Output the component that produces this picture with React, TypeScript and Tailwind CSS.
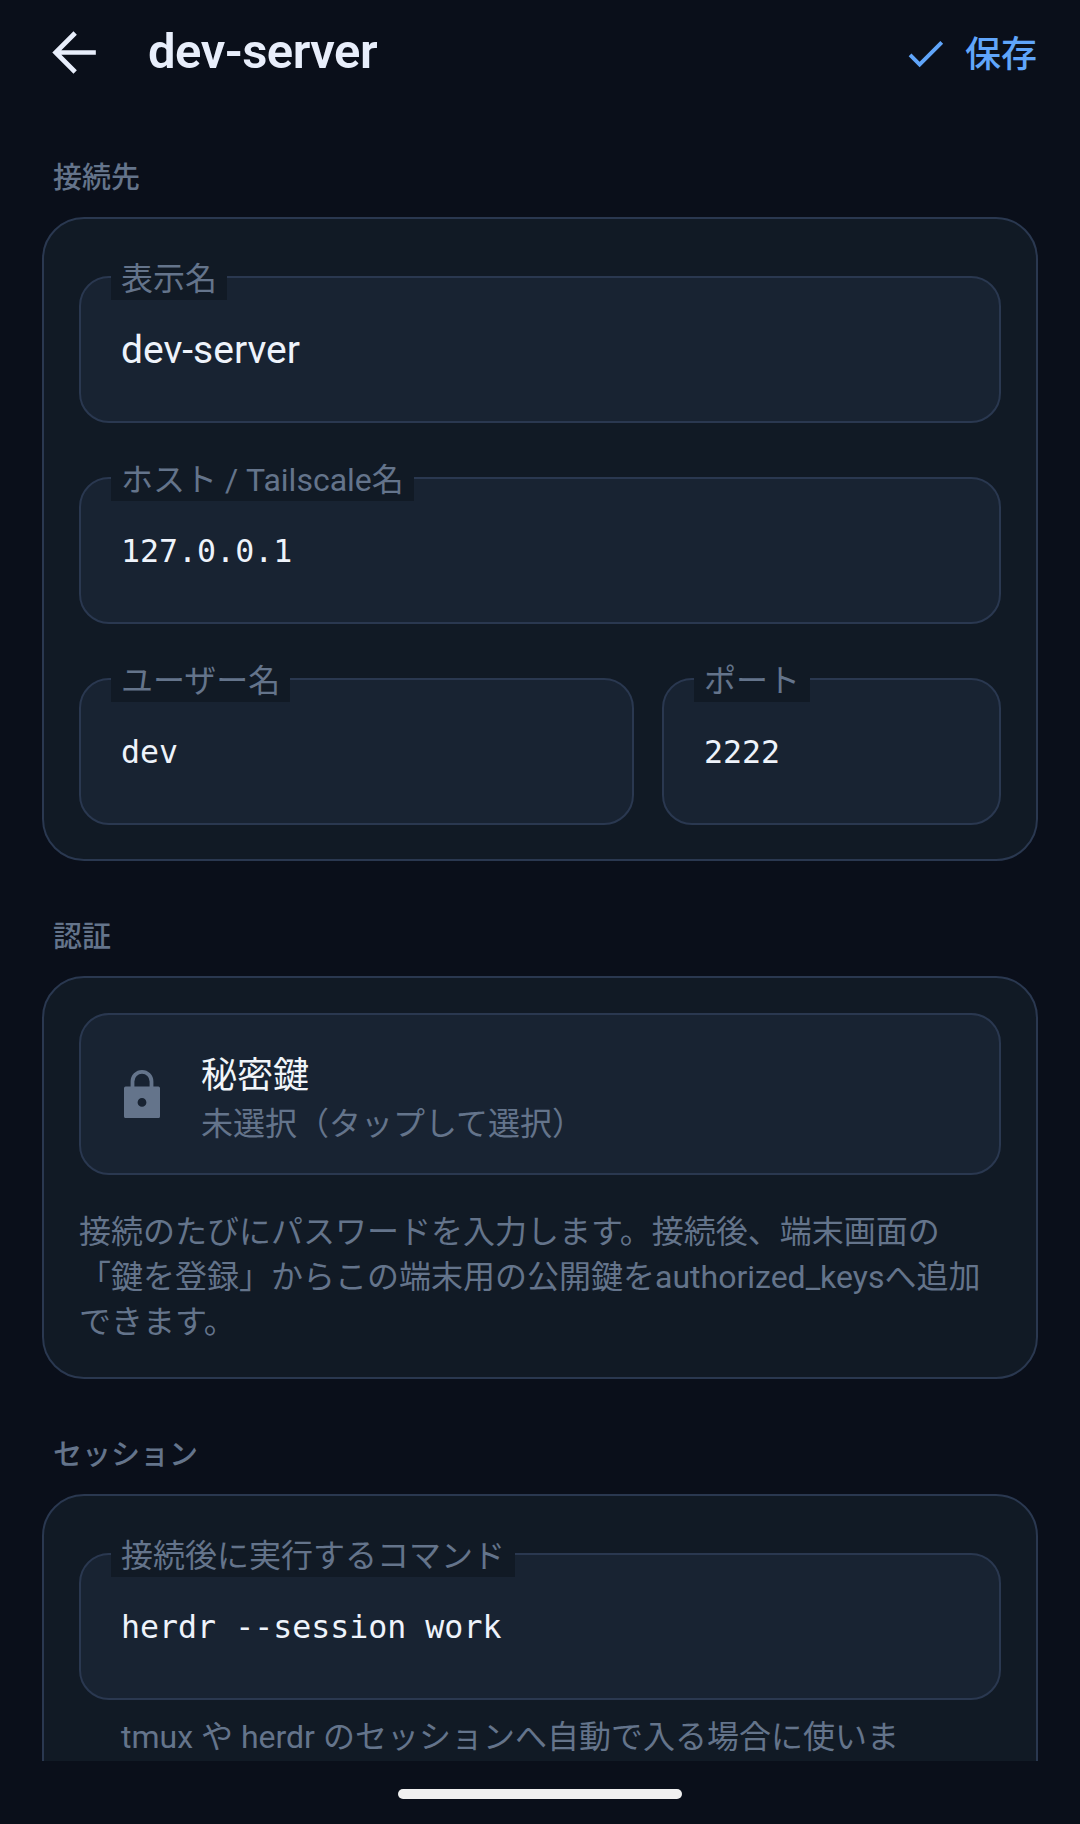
const SANS = "font-['Roboto','Noto_Sans_CJK_JP',sans-serif]";

function Field({ label, value, mono, className }: { label: string; value: string; mono?: boolean; className?: string }) {
  return (
    <div className={`relative h-[147px] rounded-[30px] border-2 border-[#2a3850] bg-[#182332] px-[40px] pt-[2px] flex items-center ${className ?? ''}`}>
      <span className="absolute left-[30px] top-[-20px] h-[42px] px-[10px] bg-[#111a25] text-[32px] leading-[42px] text-[#64748b] whitespace-nowrap">
        {label}
      </span>
      <span className={mono ? "font-['DejaVu_Sans_Mono',monospace] text-[31.6px] text-[#eef3fb]" : 'text-[39px] text-[#eef3fb]'}>
        {value}
      </span>
    </div>
  );
}

function SectionLabel({ children }: { children: string }) {
  return <h2 className="pl-[53px] pt-[1px] text-[29px] leading-[40px] font-medium text-[#64748b]">{children}</h2>;
}

function Card({ children, className }: { children: React.ReactNode; className?: string }) {
  return (
    <div className={`mx-[42px] mt-[19px] rounded-[42px] border-2 border-[#2a3850] bg-[#111a25] px-[35px] ${className ?? ''}`}>
      {children}
    </div>
  );
}

export default function App() {
  return (
    <div className={`h-[1824px] w-[1080px] flex flex-col bg-[#0a0f1a] overflow-hidden ${SANS}`}>
      {/* Top bar */}
      <div className="h-[104px] shrink-0 flex items-center pl-[40px] pr-[43px]">
        <svg width="67" height="67" viewBox="0 0 24 24" fill="none" stroke="currentColor" strokeWidth="1.7" className="text-[#e8eefb] shrink-0">
          <path d="M20 12H6M12.600 5 5.600 12l7 7" />
        </svg>
        <h1 className="ml-[41px] flex-1 text-[49px] font-semibold tracking-[-0.5px] text-[#e8eefb]">dev-server</h1>
        <div className="flex items-center gap-[16px] pt-[6px] text-[#60a5fa]">
          <svg width="47" height="47" viewBox="0 0 24 24" fill="currentColor" className="shrink-0 -mt-[4px]">
            <path d="M9 16.170 4.830 12l-1.420 1.410L9 19 21 7l-1.410-1.410z" />
          </svg>
          <span className="text-[36px] font-medium">保存</span>
        </div>
      </div>

      <div className="flex-1 min-h-0 overflow-hidden pt-[53px]">
        <SectionLabel>接続先</SectionLabel>
        <Card className="pt-[57px] pb-[34px]">
          <div className="flex flex-col gap-[54px]">
            <Field label="表示名" value="dev-server" />
            <Field label="ホスト / Tailscale名" value="127.0.0.1" mono />
            <div className="flex gap-[28px]">
              <Field label="ユーザー名" value="dev" mono className="flex-1" />
              <Field label="ポート" value="2222" mono className="w-[339px]" />
            </div>
          </div>
        </Card>

        <div className="mt-[55px]">
          <SectionLabel>認証</SectionLabel>
        </div>
        <Card className="pt-[35px] pb-[32px]">
          <div className="h-[162px] rounded-[30px] border-2 border-[#2a3850] bg-[#182332] flex items-center pl-[43px]">
            <svg width="36" height="48" viewBox="0 0 18 24" className="text-[#64748b] shrink-0">
              <path
                fill="currentColor"
                fillRule="evenodd"
                d="M3.300 8.300V5.700a5.700 5.700 0 0 1 11.400 0v2.600h2.500a.8.800 0 0 1 .8.800v14.100a.8.800 0 0 1-.8.8H.8a.8.800 0 0 1-.8-.8V9.100a.8.800 0 0 1 .8-.8zM5.200 8.300h7.600V5.700a3.800 3.800 0 0 0-7.600 0zM9 14a2.200 2.200 0 1 0 0 4.400A2.200 2.200 0 0 0 9 14z"
              />
            </svg>
            <div className="ml-[41px] mt-[11px]">
              <div className="text-[36px] leading-[48px] text-[#f1f5f9]">秘密鍵</div>
              <div className="text-[32px] leading-[48px] text-[#64748b]">未選択（タップして選択）</div>
            </div>
          </div>
          <p className="mt-[35px] text-[32px] leading-[45px] text-[#64748b]">
            接続のたびにパスワードを入力します。接続後、端末画面の「鍵を登録」からこの端末用の公開鍵をauthorized_keysへ追加できます。
          </p>
        </Card>

        <div className="mt-[55px]">
          <SectionLabel>セッション</SectionLabel>
        </div>
        <Card className="pt-[57px] pb-[35px]">
          <Field label="接続後に実行するコマンド" value="herdr --session work" mono />
          <p className="mt-[15px] pl-[42px] pr-[87px] text-[32px] leading-[45px] text-[#64748b]">
            tmux や herdr のセッションへ自動で入る場合に使います。
          </p>
        </Card>
      </div>

      {/* Home indicator */}
      <div className="h-[63px] shrink-0 flex justify-center pt-[28px]">
        <div className="h-[10px] w-[284px] rounded-full bg-[#f0f0f0]" />
      </div>
    </div>
  );
}
